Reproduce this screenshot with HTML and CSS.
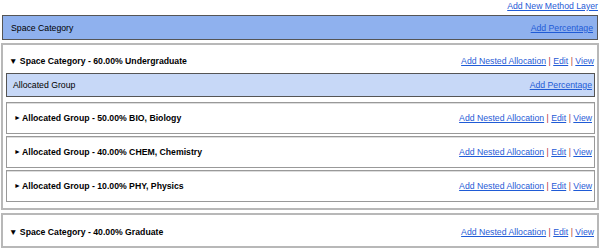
FILE: index.html
```html
<!DOCTYPE html>
<html>
<head>
<meta charset="utf-8">
<link rel="stylesheet" href="styles.css">
</head>
<body>
<div class="top-link"><a href="#">Add New Method Layer</a></div>
<div class="method-bar">
  <span>Space Category</span>
  <a href="#">Add Percentage</a>
</div>
<div class="category">
  <div class="cat-head">
    <span class="title"><span class="tri-down">▼</span> Space Category - 60.00% Undergraduate</span>
    <span class="actions"><a href="#">Add Nested Allocation</a> <span class="sep">|</span> <a href="#">Edit</a> <span class="sep">|</span> <a href="#">View</a></span>
  </div>
  <div class="group-bar">
    <span>Allocated Group</span>
    <a href="#">Add Percentage</a>
  </div>
  <div class="group">
    <span class="title"><span class="tri-right">►</span>Allocated Group - 50.00% BIO, Biology</span>
    <span class="actions"><a href="#">Add Nested Allocation</a> <span class="sep">|</span> <a href="#">Edit</a> <span class="sep">|</span> <a href="#">View</a></span>
  </div>
  <div class="group">
    <span class="title"><span class="tri-right">►</span>Allocated Group - 40.00% CHEM, Chemistry</span>
    <span class="actions"><a href="#">Add Nested Allocation</a> <span class="sep">|</span> <a href="#">Edit</a> <span class="sep">|</span> <a href="#">View</a></span>
  </div>
  <div class="group">
    <span class="title"><span class="tri-right">►</span>Allocated Group - 10.00% PHY, Physics</span>
    <span class="actions"><a href="#">Add Nested Allocation</a> <span class="sep">|</span> <a href="#">Edit</a> <span class="sep">|</span> <a href="#">View</a></span>
  </div>
</div>
<div class="category last">
  <div class="cat-head">
    <span class="title"><span class="tri-down">▼</span> Space Category - 40.00% Graduate</span>
    <span class="actions"><a href="#">Add Nested Allocation</a> <span class="sep">|</span> <a href="#">Edit</a> <span class="sep">|</span> <a href="#">View</a></span>
  </div>
</div>
</body>
</html>
```
FILE: styles.css
```css
body {
  margin: 0;
  font-family: "Liberation Sans", Arial, sans-serif;
  font-size: 8.7px;
  color: #000;
  background: #fff;
}
a {
  color: #1f5bd6;
  text-decoration: underline;
}
.sep {
  color: #b0303c;
}
.top-link {
  text-align: right;
  padding: 1px 2px 0 0;
  height: 14px;
  line-height: 11px;
}
.method-bar {
  margin: 0 2px;
  height: 23px;
  border: 1px solid #555;
  background: #8fb1ee;
  display: flex;
  justify-content: space-between;
  align-items: center;
  padding: 0 4px 0 8px;
}
.category {
  margin: 3px 1px 0 1px;
  border: 2px solid #b8b8b8;
  padding: 0 2px 6px 3px;
}
.category.last {
  margin-top: 3px;
  padding-bottom: 3px;
}
.cat-head {
  display: flex;
  justify-content: space-between;
  align-items: center;
  height: 28px;
  padding: 4px 1px 0 3px;
  box-sizing: border-box;
}
.category.last .cat-head {
  padding-top: 5px;
}
.cat-head .title,
.group .title {
  font-weight: bold;
}
.tri-down {
  font-size: 8.5px;
}
.tri-right {
  font-size: 7px;
  margin-right: 1px;
  vertical-align: 1px;
}
.group-bar {
  height: 22px;
  border: 1px solid #555;
  background: #c7d8f7;
  display: flex;
  justify-content: space-between;
  align-items: center;
  padding: 0 2px 0 6px;
}
.group {
  margin-top: 5px;
  height: 30px;
  border: 1px solid #999;
  box-shadow: inset 0 1px 0 #ddd;
  display: flex;
  justify-content: space-between;
  align-items: center;
  padding: 0 2px 0 7px;
}
.group + .group {
  margin-top: 2px;
}
```
